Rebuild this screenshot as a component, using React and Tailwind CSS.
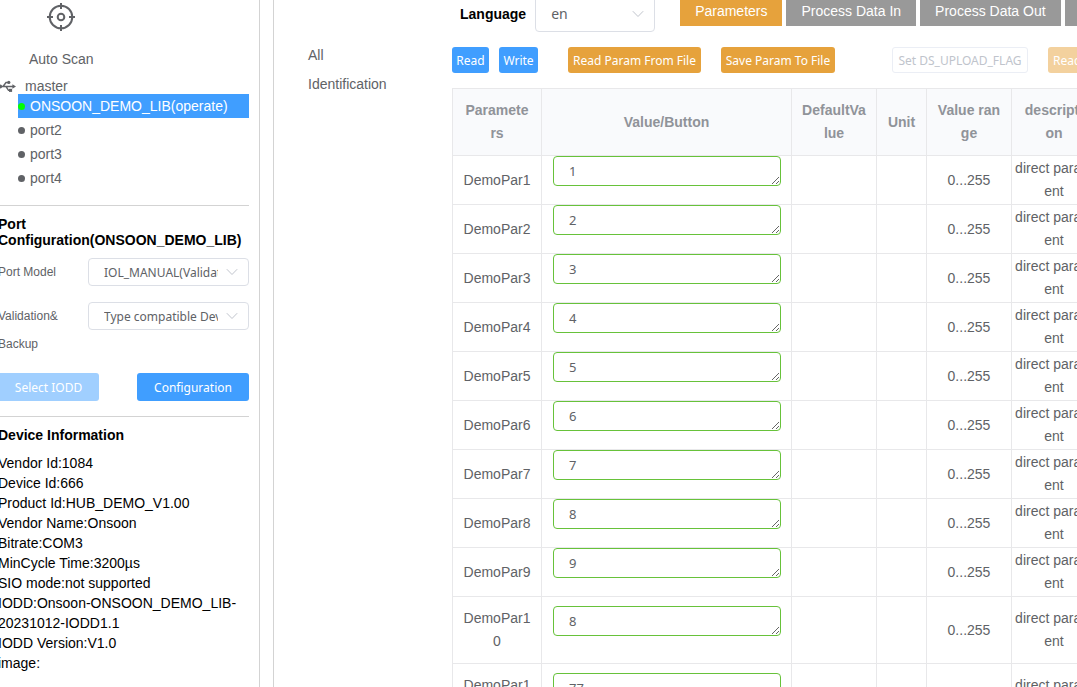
import React from "react";

const ports = ["port2", "port3", "port4"];

const deviceInfo = [
  "Vendor Id:1084",
  "Device Id:666",
  "Product Id:HUB_DEMO_V1.00",
  "Vendor Name:Onsoon",
  "Bitrate:COM3",
  "MinCycle Time:3200µs",
  "SIO mode:not supported",
  "IODD:Onsoon-ONSOON_DEMO_LIB-20231012-IODD1.1",
  "IODD Version:V1.0",
  "image:",
];

const rows = [
  ["DemoPar1", "1"],
  ["DemoPar2", "2"],
  ["DemoPar3", "3"],
  ["DemoPar4", "4"],
  ["DemoPar5", "5"],
  ["DemoPar6", "6"],
  ["DemoPar7", "7"],
  ["DemoPar8", "8"],
  ["DemoPar9", "9"],
  ["DemoPar10", "8"],
  ["DemoPar11", "77"],
];

const tabs = ["Parameters", "Process Data In", "Process Data Out", "Events"];

function CrosshairIcon() {
  return (
    <svg className="size-7" viewBox="0 0 28 28" fill="none" stroke="#606266" strokeWidth="2" aria-hidden="true">
      <circle cx="14" cy="14" r="11.3" />
      <circle cx="14" cy="14" r="3.3" />
      <path d="M14 0v6M14 22v6M0 14h6M22 14h6" />
    </svg>
  );
}

function UsbIcon() {
  return (
    <svg className="h-3 w-[18px] shrink-0" viewBox="0 0 18 12" fill="none" stroke="#606266" aria-hidden="true">
      <path d="M2 6.5H15M5 6.5L8 2.5H10M8 6.5L10.5 10.4H12" strokeWidth="1.4" />
      <circle cx="2.2" cy="6.5" r="1.9" fill="#606266" stroke="none" />
      <circle cx="10.8" cy="2.4" r="1.6" fill="#606266" stroke="none" />
      <rect x="11" y="8.8" width="3.1" height="3.1" fill="#606266" stroke="none" />
      <path d="M14.4 4.2L18 6.5L14.4 8.8Z" fill="#606266" stroke="none" />
    </svg>
  );
}

function Dropdown({ id, value, className, selectClass }) {
  return (
    <div className={"relative shrink-0 " + className}>
      <select
        id={id}
        className={
          "block w-full appearance-none overflow-hidden rounded border border-[#dcdfe6] bg-white pr-[30px] pl-[15px] text-[#606266] " +
          selectClass
        }
      >
        <option>{value}</option>
      </select>
      <svg
        className="pointer-events-none absolute top-1/2 right-[11px] h-2 w-3 -translate-y-1/2"
        viewBox="0 0 12 8"
        fill="none"
        stroke="#c0c4cc"
        aria-hidden="true"
      >
        <path d="M0.8 1.2L6 6.5L11.2 1.2" />
      </svg>
    </div>
  );
}

function ToolButton({ className, children, disabled }) {
  return (
    <button
      type="button"
      disabled={disabled}
      className={"h-[26px] shrink-0 rounded-[3px] pt-0.5 font-['Noto_Sans',sans-serif] text-xs whitespace-nowrap " + className}
    >
      {children}
    </button>
  );
}

function Sidebar() {
  return (
    <aside className="-ml-0.5 w-[262px] shrink-0 border-r border-[#d3d3d3] pr-2.5">
      <button type="button" className="ml-[31px] flex flex-col items-center gap-4 pt-[3px] leading-6 text-[#606266]">
        <CrosshairIcon />
        Auto Scan
      </button>

      <div className="mt-[7px] flex h-4 items-center gap-[9px] text-[#606266]">
        <UsbIcon />
        master
      </div>
      <ul className="ml-5 leading-6 text-[#606266]">
        <li className="flex items-center gap-[5px] bg-[#409eff] text-white">
          <span className="size-[7px] rounded-full bg-[#00ff00]" />
          ONSOON_DEMO_LIB(operate)
        </li>
        {ports.map((p) => (
          <li key={p} className="flex items-center gap-[5px]">
            <span className="size-[7px] rounded-full bg-[#606266]" />
            {p}
          </li>
        ))}
      </ul>

      <section className="mt-[15px] border-t border-[#d3d3d3] pt-2.5">
        <h2 className="leading-4 font-bold break-words">Port Configuration(ONSOON_DEMO_LIB)</h2>
        <div className="mt-2.5 flex items-start justify-between text-xs leading-7 text-[#606266]">
          <label htmlFor="port-model">Port Model</label>
          <Dropdown
            id="port-model"
            value="IOL_MANUAL(Validation)"
            className="w-[161px]"
            selectClass="h-7 pt-0.5 font-['Noto_Sans',sans-serif] text-xs"
          />
        </div>
        <div className="mt-4 flex items-start justify-between text-xs leading-7 text-[#606266]">
          <label htmlFor="validation" className="w-[70px]">
            Validation&amp; Backup
          </label>
          <Dropdown
            id="validation"
            value="Type compatible Device"
            className="w-[161px]"
            selectClass="h-7 pt-0.5 font-['Noto_Sans',sans-serif] text-xs"
          />
        </div>
        <div className="mt-[15px] flex justify-between font-['Noto_Sans',sans-serif] text-xs text-white">
          <button type="button" disabled className="h-7 w-[101px] rounded-[3px] bg-[#a0cfff] pt-0.5">
            Select IODD
          </button>
          <button type="button" className="h-7 w-28 rounded-[3px] bg-[#409eff] pt-0.5">
            Configuration
          </button>
        </div>
      </section>

      <section className="mt-[15px] border-t border-[#d3d3d3] pt-2.5">
        <h2 className="leading-4 font-bold">Device Information</h2>
        <ul className="mt-2.5 leading-5">
          {deviceInfo.map((line) => (
            <li key={line}>{line}</li>
          ))}
        </ul>
      </section>
    </aside>
  );
}

function ParameterTable() {
  const cell = "border-r border-b border-[#e8e8ea] break-all ";
  return (
    <table className="mt-[15px] w-[645px] table-fixed border-separate border-spacing-0 border-t border-l border-[#e8e8ea] text-center leading-[23px] text-[#606266]">
      <colgroup>
        <col className="w-[89px]" />
        <col className="w-[250px]" />
        <col className="w-[85px]" />
        <col className="w-[50px]" />
        <col className="w-[85px]" />
        <col className="w-[85px]" />
      </colgroup>
      <thead className="bg-[#f9fafc] text-[#909399]">
        <tr>
          {["Parameters", "Value/Button", "DefaultValue", "Unit", "Value range", "description"].map((h) => (
            <th key={h} className={cell + "px-2.5 py-2.5 font-bold"}>
              {h}
            </th>
          ))}
        </tr>
      </thead>
      <tbody>
        {rows.map(([name, value]) => (
          <tr key={name}>
            <td className={cell + "px-2.5 py-2.5"}>{name}</td>
            <td className={cell + "px-[11px] pb-[18px]"}>
              <textarea
                aria-label={name}
                defaultValue={value}
                rows={1}
                className="block h-[30px] w-[228px] overflow-hidden rounded border border-[#67c23a] bg-white px-[15px] py-[5px] font-['Noto_Sans',sans-serif] text-[13px] leading-[18px]"
              />
            </td>
            <td className={cell} />
            <td className={cell} />
            <td className={cell + "px-2.5"}>0...255</td>
            <td className={cell + "px-0.5 py-px"}>direct parament</td>
          </tr>
        ))}
      </tbody>
    </table>
  );
}

export default function App() {
  return (
    <div className="flex h-screen overflow-hidden bg-white font-['Liberation_Sans',Arial,sans-serif] text-sm text-black">
      <Sidebar />
      <main className="ml-[13px] flex min-w-0 flex-1 overflow-hidden border-l border-[#d3d3d3]">
        <nav className="w-[178px] shrink-0 pt-[41px] pl-[34px] leading-[29px] text-[#606266]">
          <a href="#all" className="block">
            All
          </a>
          <a href="#identification" className="block">
            Identification
          </a>
        </nav>
        <div className="min-w-0 flex-1 overflow-hidden">
          <header className="-mt-1 flex h-9 items-start">
            <label htmlFor="language" className="ml-2 shrink-0 pt-2 leading-5 font-bold">
              Language
            </label>
            <Dropdown
              id="language"
              value="en"
              className="ml-[9px] w-[120px]"
              selectClass="h-9 font-['Noto_Sans',sans-serif] text-sm"
            />
            <div className="ml-[25px] flex gap-1">
              {tabs.map((t, i) => (
                <button
                  key={t}
                  type="button"
                  className={
                    "h-[30px] shrink-0 px-[15px] whitespace-nowrap text-white " + (i === 0 ? "bg-[#e6a23c]" : "bg-[#999999]")
                  }
                >
                  {t}
                </button>
              ))}
            </div>
          </header>
          <div className="mt-[15px] flex">
            <ToolButton className="w-[37px] bg-[#409eff] text-white">Read</ToolButton>
            <ToolButton className="ml-2.5 w-[39px] bg-[#409eff] text-white">Write</ToolButton>
            <ToolButton className="ml-[30px] w-[133px] bg-[#e6a23c] text-white">Read Param From File</ToolButton>
            <ToolButton className="ml-5 w-[114px] bg-[#e6a23c] text-white">Save Param To File</ToolButton>
            <ToolButton disabled className="ml-[57px] w-[136px] border border-[#ebeef5] bg-white text-[#c0c4cc]">
              Set DS_UPLOAD_FLAG
            </ToolButton>
            <ToolButton disabled className="ml-5 bg-[#f3d19e] px-[5px] text-white">
              Read DS
            </ToolButton>
          </div>
          <ParameterTable />
        </div>
      </main>
    </div>
  );
}
